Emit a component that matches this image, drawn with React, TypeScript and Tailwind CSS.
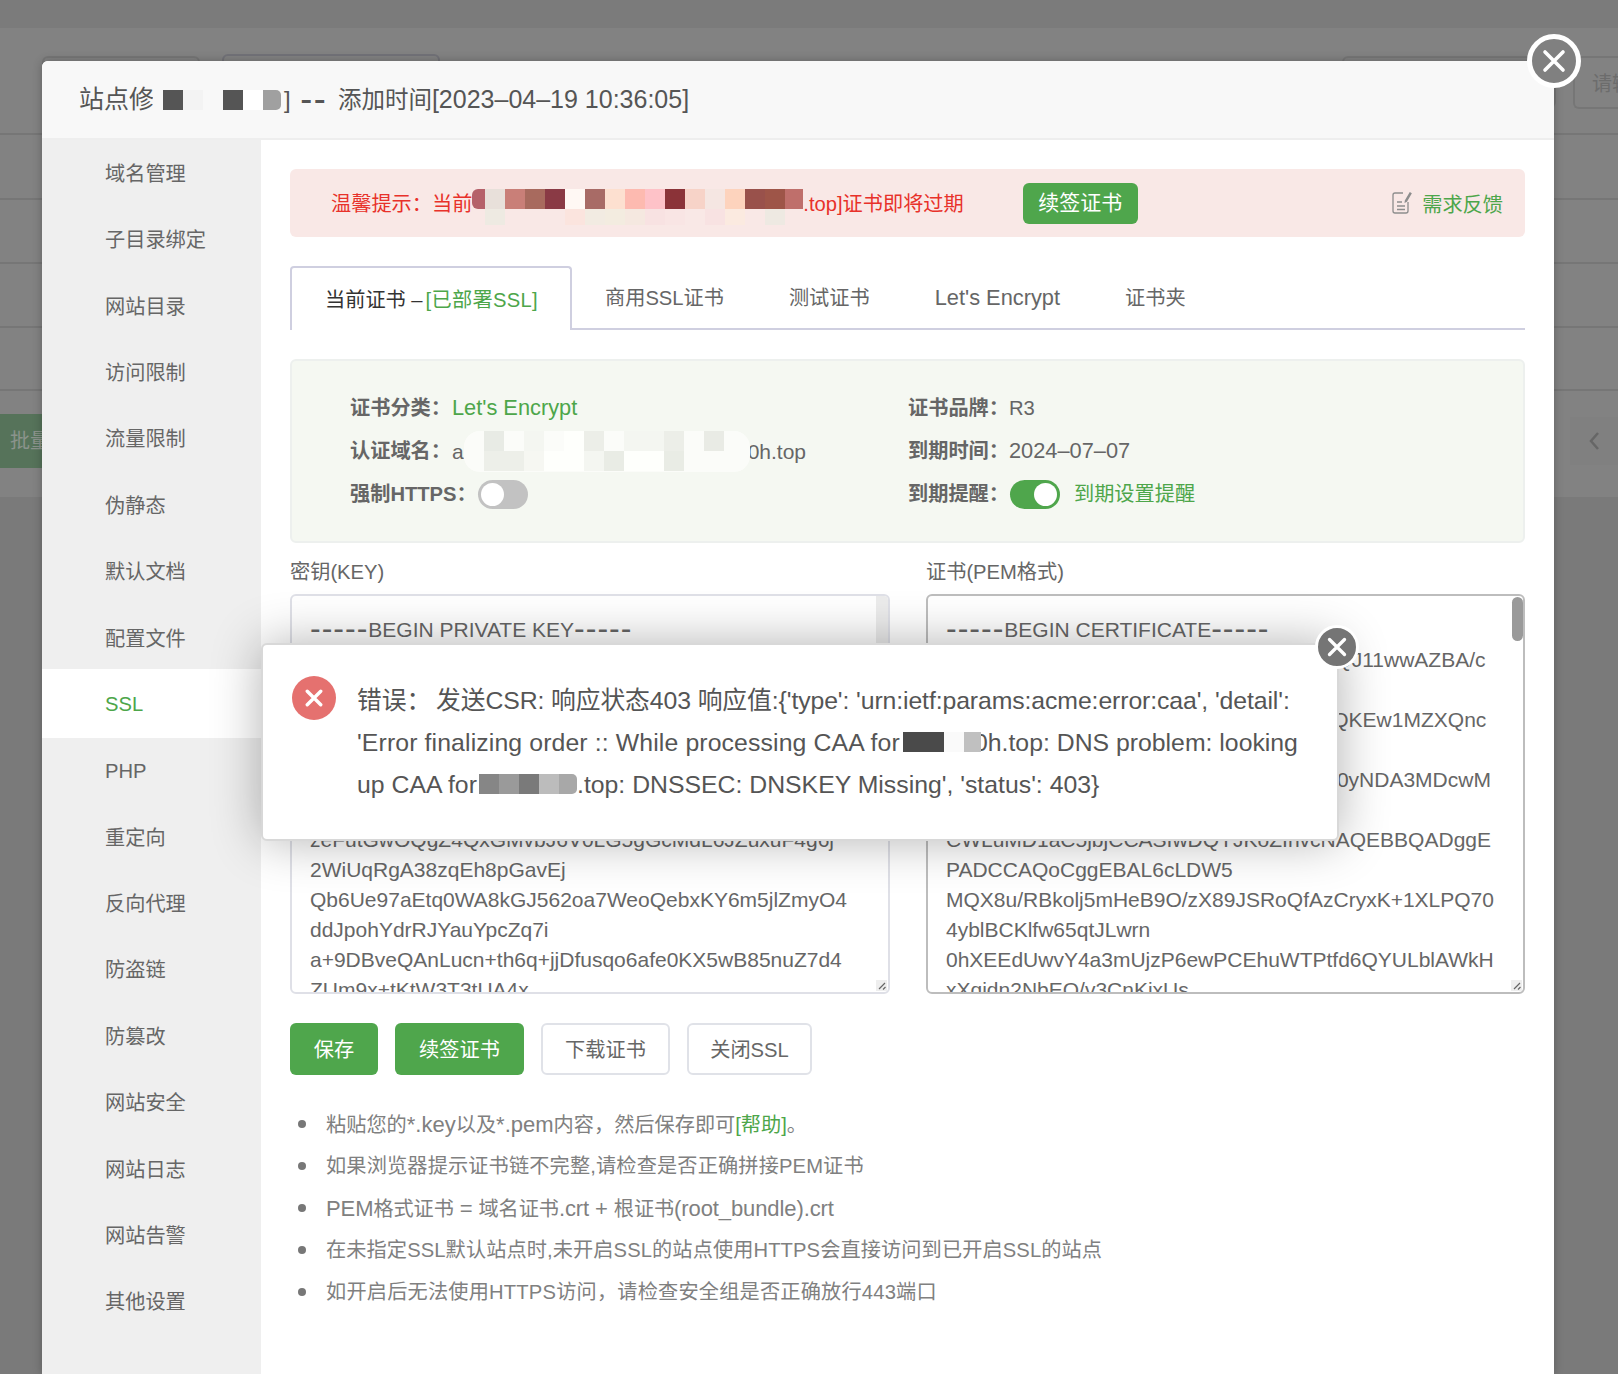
import type { ReactNode } from 'react'

const SIDE_ITEMS = [
  '域名管理', '子目录绑定', '网站目录', '访问限制', '流量限制', '伪静态', '默认文档', '配置文件', 'SSL',
  'PHP', '重定向', '反向代理', '防盗链', '防篡改', '网站安全', '网站日志', '网站告警', '其他设置',
]

function Dashes({ children }: { children: string }) {
  return <span className="relative top-[2px] text-[32px] leading-[0] tracking-[1px]">{children}</span>
}

const KEY_LINES: ReactNode[] = [
  <><Dashes>-----</Dashes>BEGIN PRIVATE KEY<Dashes>-----</Dashes></>,
  'MIIEvQIBADANBgkqhkiG9w0BAQEFAASCBKcwggSjAgEA',
  'AoIBAQC3mXv1Lq7TnWfP0a',
  'dK2sYhUe4RzG8oNcQ1jVbLw6xHt9MpF3iAyE5uZrS7Kq',
  'Bn0TgCv2JmWx',
  'Hf8pLs1eOaD6yRkU3NqZtV9cGi4XwJb7MQhE2lPoTnYs',
  'r5AzKu0CdWv',
  'zeFutGwOQgZ4QxGMvbJ6V0LG5gGcMdL6JZuxuF4g6j',
  '2WiUqRgA38zqEh8pGavEj',
  'Qb6Ue97aEtq0WA8kGJ562oa7WeoQebxKY6m5jlZmyO4',
  'ddJpohYdrRJYauYpcZq7i',
  'a+9DBveQAnLucn+th6q+jjDfusqo6afe0KX5wB85nuZ7d4',
  'ZUm9x+tKtW3T3tUA4x',
]

const CERT_LINES: ReactNode[] = [
  <><Dashes>-----</Dashes>BEGIN CERTIFICATE<Dashes>-----</Dashes></>,
  'MIIFOzCCBCOgAwIBAgISBGpkTzR8vXaQJ11wwAZBA/c',
  'n4PqLs0Ue7XaWm',
  'MA0GCSqGSIb3DQEBCwDIxCzAJBgNVQKEw1MZXQnc',
  'gRW5jcnlwdDEL',
  'MAkGA1UEAxMCUjMwHhcNwNDA4MDg0yNDA3MDcwM',
  'Tg0NzU1WjAY',
  'CWLuMD1aC5jbjCCASIwDQYJKoZIhvcNAQEBBQADggE',
  'PADCCAQoCggEBAL6cLDW5',
  'MQX8u/RBkolj5mHeB9O/zX89JSRoQfAzCryxK+1XLPQ70',
  '4yblBCKlfw65qtJLwrn',
  '0hXEEdUwvY4a3mUjzP6ewPCEhuWTPtfd6QYULblAWkH',
  'xXqidn2NbEQ/v3CnKixUs',
]

const ALERT_TOP = ['#b5616a', '#e8e0da', '#c97f78', '#a86a5e', '#8a3a45', '#fff8f4', '#a86b66', '#fde0d0', '#fdbab0', '#fec2c8', '#8b3338', '#f7d3c8', '#f5e6e2', '#fdd3bd', '#99514b', '#9e5548', '#bf6f6b']
const ALERT_BOTTOM = ['#f9e8e6', '#eeeae2', '#f9e8e6', '#f9e8e6', '#f9e8e6', '#fbe4de', '#f2ebe2', '#f3ece0', '#f5e8e0', '#f8e2e2', '#f9e5e4', '#f9e8e6', '#f8e2e2', '#fbeae0', '#f9e8e6', '#eee9e2', '#f9e8e6']

const DOMAIN_TOP = ['#fbfcf9', '#e8ebe5', '#fbfcf9', '#f4f6f1', '#fbfcf9', '#fefffc', '#eceee8', '#fbfcf9', '#f4f6f1', '#f4f6f1', '#eceee8', '#fbfcf9', '#e9ebe5', '#fbfcf9']
const DOMAIN_BOTTOM = ['#fbfcf9', '#edefe9', '#edefe9', '#f6f7f2', '#fefffc', '#fefffc', '#f4f6f1', '#e9ece5', '#fefffc', '#fefffc', '#e9ece5', '#fbfcf9', '#fbfcf9', '#fbfcf9']

function Lat({ children }: { children: ReactNode }) {
  return <span className="text-[22px]">{children}</span>
}

const TIPS: ReactNode[] = [
  <>粘贴您的<Lat>*.key</Lat>以及<Lat>*.pem</Lat>内容，然后保存即可<span className="text-[#4da64a]">[帮助]</span>。</>,
  <span className="tracking-[0.14px]">如果浏览器提示证书链不完整,请检查是否正确拼接PEM证书</span>,
  <span className="tracking-[-0.1px]"><Lat>PEM</Lat>格式证书<Lat> = </Lat>域名证书<Lat>.crt + </Lat>根证书<Lat>(root_bundle).crt</Lat></span>,
  <span className="tracking-[0.1px]">在未指定SSL默认站点时,未开启SSL的站点使用HTTPS会直接访问到已开启SSL的站点</span>,
  <span className="tracking-[0.19px]">如开启后无法使用HTTPS访问，请检查安全组是否正确放行443端口</span>,
]

function Blocks({ colors, className }: { colors: string[]; className: string }) {
  return (
    <span className="flex shrink-0">
      {colors.map((c, i) => (
        <span key={i} className={className} style={{ backgroundColor: c }} />
      ))}
    </span>
  )
}

function CloseX({ size, stroke }: { size: number; stroke: number }) {
  return (
    <svg width={size} height={size} viewBox="0 0 24 24" fill="none" stroke="#fff" strokeWidth={stroke} strokeLinecap="round">
      <path d="M3 3 21 21M21 3 3 21" />
    </svg>
  )
}

function Toggle({ on }: { on: boolean }) {
  return (
    <span className={`flex h-[29px] w-[50px] items-center rounded-full p-[3px] ${on ? 'justify-end bg-[#4fa64c]' : 'justify-start bg-[#c2c2c2]'}`}>
      <span className="size-[23px] rounded-full bg-white" />
    </span>
  )
}

function CodeBox({ lines, focused }: { lines: ReactNode[]; focused?: boolean }) {
  return (
    <div className={`relative h-[400px] overflow-hidden rounded-[6px] border-2 bg-white px-[18px] pt-[19px] text-[21px] leading-[30px] whitespace-nowrap text-[#666] ${focused ? 'border-[#bdbdbd]' : 'border-[#dfe0e7]'}`}>
      {lines.map((l, i) => (
        <div key={i} className="h-[30px]">{l}</div>
      ))}
      {focused ? (
        <span className="absolute top-[1px] right-0 h-[44px] w-[11px] rounded-full bg-[#9a9a9a]" />
      ) : (
        <span className="absolute top-0 right-0 h-[100px] w-[12px] bg-[#ececec]" />
      )}
      <svg className="absolute right-[1px] bottom-[1px]" width="11" height="11" viewBox="0 0 11 11" fill="none">
        <rect width="11" height="11" fill="#eee" />
        <path d="M3 9 9 3M7 9.500 9.500 7" stroke="#666" strokeWidth="1.200" />
      </svg>
    </div>
  )
}

function InfoLabel({ children }: { children: ReactNode }) {
  return <span className="font-semibold text-[#666]">{children}</span>
}

export default function App() {
  return (
    <div className="relative h-[1374px] w-[1618px] overflow-hidden bg-[#7a7a7a] [font-family:'Liberation_Sans','Noto_Sans_CJK_SC',sans-serif]">
      {/* page behind the overlay */}
      <div className="h-[28px] bg-[#7b7b7b]" />
      <div className="h-[469px] bg-[#828282]">
        <div className="flex h-[107px] justify-between border-b-2 border-[#767676] pt-[28px] pl-[42px]">
          <div className="flex gap-[22px]">
            <div className="h-[52px] w-[158px] rounded-[6px] border-2 border-[#767676]" />
            <div className="-mt-[2px] h-[52px] w-[218px] rounded-[6px] border-2 border-[#727278]" />
          </div>
          <div className="flex gap-[17px]">
            <div className="h-[52px] w-[214px] rounded-[6px] border-2 border-[#767676]" />
            <div className="h-[53px] w-[45px] overflow-hidden rounded-l-[6px] border-y-2 border-l-2 border-[#767676] pl-[17px] text-[20px] leading-[52px] whitespace-nowrap text-[#6c6c6c]">请输</div>
          </div>
        </div>
        <div className="h-[65px] border-b-2 border-[#767676]" />
        <div className="h-[64px] border-b-2 border-[#767676]" />
        <div className="h-[64px] border-b-2 border-[#767676]" />
        <div className="h-[63px] border-b-2 border-[#767676]" />
        <div className="flex h-[78px] items-start justify-between">
          <div className="mt-[23px] h-[54px] w-[42px] overflow-hidden bg-[#56735a] pl-[10px] text-[20px] leading-[54px] whitespace-nowrap text-[#8b938c]">批量</div>
          <div className="mt-[26px] flex h-[48px] w-[48px] items-center bg-[#808080] pl-[17px]">
            <svg width="14" height="22" viewBox="0 0 14 22" fill="none" stroke="#666" strokeWidth="2.500"><path d="M11 3 4 11l7 8" /></svg>
          </div>
        </div>
      </div>

      {/* site settings window */}
      <div className="absolute top-[61px] left-[42px] flex h-[1313px] w-[1512px] flex-col rounded-t-[6px] bg-white shadow-[0_0_10px_rgba(0,0,0,0.25)]">
        <div className="flex h-[79px] shrink-0 items-center rounded-t-[6px] border-b-2 border-[#eeeeee] bg-[#f8f8f8] pl-[37px] text-[24px] text-[#555]">
          <span className="w-[74px] overflow-hidden text-[25px] whitespace-nowrap">站点修改</span>
          <span className="ml-[10px] h-[20px] w-[20px] bg-[#555]" />
          <span className="h-[20px] w-[20px] bg-[#f3f3f3]" />
          <span className="w-[20px]" />
          <span className="h-[20px] w-[20px] bg-[#555]" />
          <span className="h-[20px] w-[20px] bg-white" />
          <span className="h-[20px] w-[18px] rounded-r-[5px] bg-[#a0a0a0]" />
          <span className="ml-[3px] whitespace-nowrap">] <span className="relative top-[3px] ml-[3px] text-[36px] leading-[0] tracking-[1.300px]">--</span><span className="ml-[11px] text-[23.500px]">添加时间</span><span className="text-[25px]">[2023–04–19 10:36:05]</span></span>
        </div>

        <div className="flex min-h-0 flex-1">
          <nav className="w-[219px] shrink-0 bg-[#efefef] text-[20.200px]">
            {SIDE_ITEMS.map((item) => (
              <div key={item} className={`flex items-center pt-[1.500px] pl-[63px] ${item === 'SSL' ? '-mt-[2px] h-[68.400px] bg-white text-[#4da64a]' : 'h-[66.400px] text-[#666]'}`}>
                {item}
              </div>
            ))}
          </nav>

          <main className="min-w-0 flex-1 px-[29px] pt-[29px] text-[20.200px]">
            <div className="flex h-[68px] items-center rounded-[6px] bg-[#f9e8e6] pr-[22px] pl-[41px]">
              <span className="mt-[2px] whitespace-nowrap text-[#e8312a]">温馨提示：当前</span>
              <span className="mt-[8px] flex flex-col">
                <Blocks colors={ALERT_TOP} className="h-[20px] w-[20px] first:w-[13px] first:rounded-l-[6px] last:w-[18px]" />
                <Blocks colors={ALERT_BOTTOM} className="h-[16px] w-[20px] first:w-[13px] last:w-[18px]" />
              </span>
              <span className="mt-[2px] whitespace-nowrap text-[#e8312a]">.top]证书即将过期</span>
              <button className="ml-[59px] h-[41px] w-[115px] rounded-[6px] bg-[#4fa64c] text-[21px] text-white">续签证书</button>
              <span className="ml-auto flex items-center gap-[10px] text-[#4da64a]">
                <svg width="20" height="24" viewBox="0 0 20 24" fill="none" stroke="#8d8d8d" strokeWidth="1.300">
                  <path d="M11 2H3a2 2 0 0 0-2 2v16a2 2 0 0 0 2 2h11a2 2 0 0 0 2-2V11" />
                  <path d="M13.500 9.500 18 2l1 .6-4.500 7.700-1.200.6zM5 11h5M5 15h8M5 18.500h8" />
                </svg>
                <span className="mt-[4px]">需求反馈</span>
              </span>
            </div>

            <div className="mt-[29px] flex h-[64px] border-b-2 border-[#cfcfe0] text-[#666]">
              <div className="-mb-[2px] flex h-[64px] w-[282px] items-center rounded-t-[4px] border-x-2 border-t-2 border-[#cfcfe0] bg-white pt-[2px] pl-[33px] whitespace-nowrap text-[#333]">
                当前证书 –<span className="ml-[3px] tracking-[0.3px] text-[#4da64a]">[已部署SSL]</span>
              </div>
              <div className="flex items-center gap-[65px] pt-[2px] pl-[33px]">
                <span>商用SSL证书</span>
                <span>测试证书</span>
                <span className="text-[21.800px]">Let's Encrypt</span>
                <span>证书夹</span>
              </div>
            </div>

            <div className="mt-[29px] grid h-[184px] grid-cols-[558px_1fr] grid-rows-[43px_43px_43px] content-start rounded-[6px] border-2 border-[#edf0ee] bg-[#f5f8f2] pt-[26px] pl-[58px] text-[#666]">
              <div className="flex items-center"><InfoLabel>证书分类：</InfoLabel><span className="ml-[1px] text-[21.800px] text-[#4da64a]">Let's Encrypt</span></div>
              <div className="flex items-center"><InfoLabel>证书品牌：</InfoLabel><span>R3</span></div>
              <div className="relative flex items-center">
                <InfoLabel>认证域名：</InfoLabel><span className="ml-[1px] text-[21px]">a</span>
                <span className="absolute top-[1px] left-[114px] flex h-[41px] w-[286px] flex-col overflow-hidden rounded-[16px] bg-[#fbfcf9]">
                  <Blocks colors={DOMAIN_TOP} className="h-[20px] w-[20px]" />
                  <Blocks colors={DOMAIN_BOTTOM} className="h-[20px] w-[20px]" />
                </span>
                <span className="ml-[284px] text-[21px]">0h.top</span>
              </div>
              <div className="flex items-center"><InfoLabel>到期时间：</InfoLabel><span className="text-[21.800px]">2024–07–07</span></div>
              <div className="flex items-center"><InfoLabel>强制HTTPS：</InfoLabel><span className="ml-[1px]"><Toggle on={false} /></span></div>
              <div className="flex items-center">
                <InfoLabel>到期提醒：</InfoLabel>
                <span className="ml-[1px]"><Toggle on /></span>
                <span className="ml-[14px] text-[#4da64a]">到期设置提醒</span>
              </div>
            </div>

            <div className="mt-[14px] grid grid-cols-[600px_599px] gap-x-[36px] text-[#666]">
              <div>
                <div className="mb-[7px] h-[30px] leading-[30px]">密钥(KEY)</div>
                <CodeBox lines={KEY_LINES} />
              </div>
              <div>
                <div className="mb-[7px] h-[30px] leading-[30px]">证书(PEM格式)</div>
                <CodeBox lines={CERT_LINES} focused />
              </div>
            </div>

            <div className="mt-[29px] flex gap-[17px] [&>button]:pt-[2px]">
              <button className="h-[52px] w-[88px] rounded-[6px] bg-[#4fa64c] text-white">保存</button>
              <button className="h-[52px] w-[129px] rounded-[6px] bg-[#4fa64c] text-white">续签证书</button>
              <button className="h-[52px] w-[129px] rounded-[6px] border-2 border-[#e0e2e8] bg-white text-[#666]">下载证书</button>
              <button className="h-[52px] w-[125px] rounded-[6px] border-2 border-[#e0e2e8] bg-white text-[#666]">关闭SSL</button>
            </div>

            <ul className="mt-[28px] text-[#808080]">
              {TIPS.map((tip, i) => (
                <li key={i} className="flex h-[42px] items-center">
                  <span className="mr-[20px] ml-[8px] size-[8px] shrink-0 rounded-full bg-[#777]" />
                  <span>{tip}</span>
                </li>
              ))}
            </ul>
          </main>
        </div>
      </div>

      {/* window close */}
      <div className="absolute top-[34px] left-[1527px] flex size-[54px] items-center justify-center rounded-full border-[5px] border-white bg-[#808080]">
        <CloseX size={24} stroke={3.600} />
      </div>

      {/* error message */}
      <div className="absolute top-[643px] left-[261px] flex h-[198px] w-[1078px] rounded-[6px] border-2 border-[#d8d8d8] bg-white pt-[31px] pl-[29px] text-[24.800px] text-[#555] shadow-[0_0_50px_rgba(0,0,0,0.3)]">
        <span className="flex size-[44px] shrink-0 items-center justify-center rounded-full bg-[#e5716f]">
          <CloseX size={18} stroke={4.500} />
        </span>
        <div className="ml-[21px] leading-[42px] whitespace-nowrap">
          <div className="mt-[4px] flex tracking-[-0.1px]">
            <span className="w-[79px]">错误：</span>
            <span>发送CSR: 响应状态403 响应值:{"{'type': 'urn:ietf:params:acme:error:caa', 'detail':"}</span>
          </div>
          <div className="flex items-center">
            <span className="w-[546px] overflow-hidden tracking-[0.12px]">'Error finalizing order :: While processing CAA for</span>
            <span className="relative mb-[2px] h-[20px] w-[41px] bg-[#4a4a4a]" />
            <span className="relative mb-[2px] h-[20px] w-[20px] bg-[#fafafa]" />
            <span className="relative mb-[2px] h-[20px] w-[17px] bg-[#c0c0c0]" />
            <span className="-ml-[7px]">0h.top: DNS problem: looking</span>
          </div>
          <div className="flex items-center">
            <span className="w-[122px] overflow-hidden">up CAA for</span>
            <span className="mb-[2px] flex h-[20px] w-[98px]">
              <span className="w-[20px] bg-[#868686]" />
              <span className="w-[20px] bg-[#9a9a9a]" />
              <span className="w-[20px] bg-[#7a7a7a]" />
              <span className="w-[20px] bg-[#bcbcbc]" />
              <span className="w-[18px] rounded-r-[5px] bg-[#a8a8a8]" />
            </span>
            <span>.top: DNSSEC: DNSKEY Missing', 'status': 403{'}'}</span>
          </div>
        </div>
      </div>

      <div className="absolute top-[625px] left-[1315px] flex size-[44px] items-center justify-center rounded-full border-[3px] border-white bg-[#757575]">
        <CloseX size={20} stroke={4} />
      </div>
    </div>
  )
}
